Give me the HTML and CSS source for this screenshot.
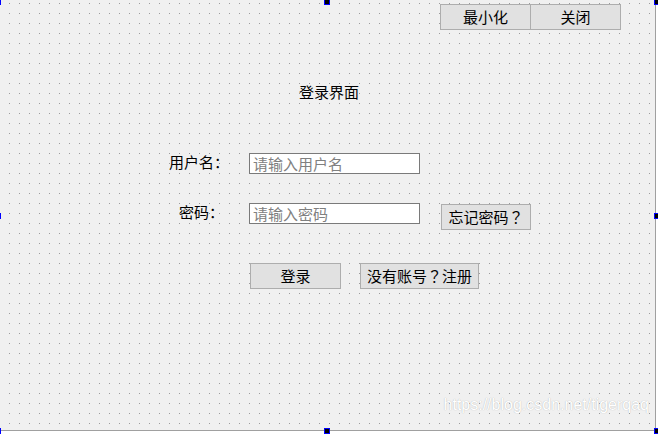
FILE: index.html
```html
<!DOCTYPE html>
<html lang="zh-CN">
<head>
  <meta charset="UTF-8" />
  <title>登录界面</title>
  <link rel="stylesheet" href="styles.css">
</head>
<body>
  <div class="form">
    <div class="topbar">
      <button class="btn btn-top">最小化</button>
      <button class="btn btn-top btn-close">关闭</button>
    </div>

    <div class="title">登录界面</div>

    <div class="row row-user">
      <label class="label label-user">用户名：</label>
      <input class="field" type="text" placeholder="请输入用户名">
    </div>

    <div class="row row-pass">
      <label class="label label-pass">密码：</label>
      <input class="field" type="password" placeholder="请输入密码">
      <button class="btn btn-forgot">忘记密码<span class="qmark" lang="ja">？</span></button>
    </div>

    <div class="row row-actions">
      <button class="btn btn-login">登录</button>
      <button class="btn btn-register">没有账号<span class="qmark" lang="ja">？</span>注册</button>
    </div>

    <div class="watermark">https://blog.csdn.net/tigerqaq</div>

    <!-- designer selection handles -->
    <span class="handle h-tl"></span>
    <span class="handle h-tm"></span>
    <span class="handle h-tr"></span>
    <span class="handle h-ml"></span>
    <span class="handle h-mr"></span>
    <span class="handle h-bl"></span>
    <span class="handle h-bm"></span>
    <span class="handle h-br"></span>
  </div>
</body>
</html>
```

FILE: styles.css
```css
* {
  margin: 0;
  padding: 0;
  box-sizing: border-box;
}

html, body {
  height: 100%;
  overflow: hidden;
  background-color: #ffffff;
  font-family: "Noto Sans CJK SC", "Noto Sans", sans-serif;
  font-size: 15px;
  color: #000;
}

.form {
  position: relative;
  width: 656px;
  height: 431px;
  border-right: 1px solid #a0a0a0;
  border-bottom: 1px solid #a0a0a0;
  background-color: #f0f0f0;
  background-image: conic-gradient(from 270deg at 1px 1px, #9c9c9c 90deg, transparent 0);
  background-size: 10px 10px;
  background-position: 9px 3px;
}

.btn {
  height: 26px;
  font-family: inherit;
  font-size: 15px;
  line-height: 24px;
  color: #000;
  background-color: #e1e1e1;
  border: 1px solid #adadad;
  outline: none;
}

/* centred full-width question mark, like the Windows UI font */
.qmark {
  font-family: "Noto Sans CJK JP", "Noto Sans CJK SC", sans-serif;
}

.topbar {
  display: flex;
  padding-top: 4px;
  padding-left: 440px;
}

.btn-top {
  width: 91px;
}

.btn-close {
  margin-left: -1px;
}

.title {
  margin-top: 52px;
  padding-left: 299px;
  line-height: 20px;
}

.row {
  display: flex;
  align-items: flex-start;
}

.row-user {
  margin-top: 51px;
}

.row-pass {
  margin-top: 29px;
}

.row-actions {
  margin-top: 33px;
  padding-left: 250px;
}

.label {
  line-height: 18px;
}

.label-user {
  margin-left: 169px;
  width: 80px;
}

.label-pass {
  margin-left: 179px;
  width: 70px;
}

.field {
  width: 171px;
  height: 21px;
  padding: 0 3px;
  font-family: inherit;
  font-size: 15px;
  border: 1px solid #7a7a7a;
  background-color: #fff;
  outline: none;
}

.field::placeholder {
  color: #808080;
}

.btn-forgot {
  width: 90px;
  margin-left: 21px;
  margin-top: 1px;
}

.btn-login {
  width: 91px;
}

.btn-register {
  width: 119px;
  margin-left: 19px;
}

.watermark {
  position: absolute;
  right: 6px;
  top: 396px;
  font-family: "Liberation Sans", Arial, sans-serif;
  font-size: 16px;
  line-height: 18px;
  color: #ffffff;
  text-shadow: 0 0 1px rgba(0, 0, 0, 0.3);
}

.handle {
  position: absolute;
  width: 6px;
  height: 6px;
  background-color: #000;
  border: 1px solid #0000ff;
}

.h-tl { left: -5px; top: -1px; }
.h-tm { left: 324px; top: -1px; }
.h-tr { left: 654px; top: -1px; }
.h-ml { left: -5px; top: 213px; }
.h-mr { left: 654px; top: 213px; }
.h-bl { left: -5px; top: 428px; }
.h-bm { left: 324px; top: 428px; }
.h-br { left: 654px; top: 428px; }
```
